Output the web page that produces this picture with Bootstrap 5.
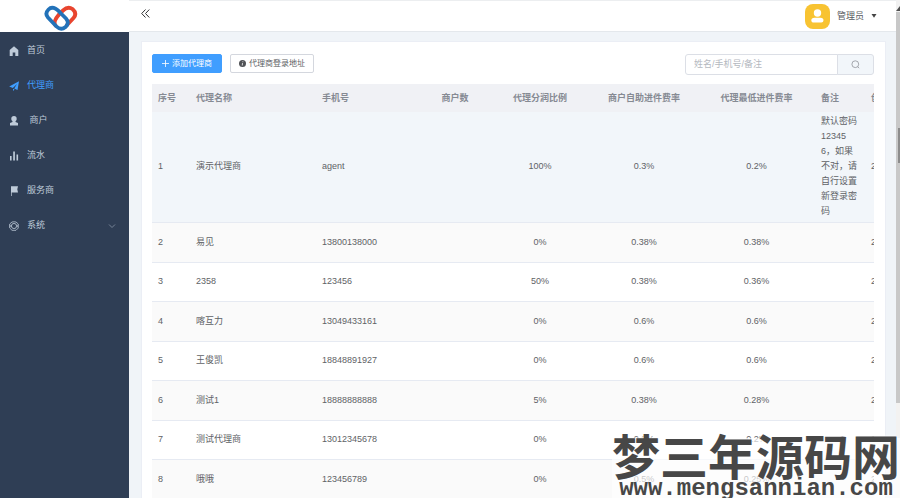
<!DOCTYPE html>
<html lang="zh-CN">
<head>
<meta charset="utf-8">
<meta name="viewport" content="width=device-width, initial-scale=1">
<title>代理商</title>
<link href="https://cdn.jsdelivr.net/npm/bootstrap@5.3.0/dist/css/bootstrap.min.css" rel="stylesheet">
<style>
body{font-family:"Liberation Sans","Noto Sans CJK SC",sans-serif;font-size:9px;line-height:15px;color:#606266;background:#f0f4f8}
.side{width:129px;background:#2f3e55}
.brand-box{height:32px;background:#fff}
.side .nav{padding-top:1px}
.side .nav-link{height:35px;padding:0 12px 0 9px;gap:8px;color:#bfcbd9}
.side .nav-link.active{color:#409eff}
.side .nav-link svg{width:10px;height:10px}
.topbar{height:32px;background:#fff;border-top:1px solid #eceef0;border-bottom:1px solid #e4e8ec;padding:0 19px 0 12px}
.topbar button,.topbar button:hover{color:#55585d;font-size:9px;line-height:15px}
.user{gap:7px}
.avatar{width:25px;height:25px;border-radius:8px;background:#f8c331}
.gutter{padding:9px 10px 0 12px}
.panel{border:1px solid #ebeef5;border-bottom:0;background:#fff;padding:12px 11px 0 10px}
.tool{height:19px;padding:0 8px;font-size:8px;line-height:15px;border-radius:2px;gap:3px;--bs-btn-border-color:#d4d7de;--bs-btn-color:#606266}
.tool-main{background:#409eff;border-color:#409eff;color:#fff;padding:0 9px}
.finder{width:189px;height:21px;margin-bottom:9px}
.finder .form-control{font-size:9px;line-height:15px;padding:0 8px;border-color:#dcdfe6;border-radius:3px;min-height:0}
.finder .form-control::placeholder{color:#b4b8c0}
.finder .btn{width:37px;background:#f2f6fa;border-color:#dcdfe6;color:#909399;border-radius:3px}
.grid{min-width:803px;table-layout:fixed;color:#606266;--bs-table-color:#606266;--bs-table-bg:#fff}
.grid th,.grid td{padding:0 6px;height:40px;border-color:#e6eaf2;word-break:break-all}
.grid th{height:28px;background:#f0f1f5;color:#868a93;border:0;white-space:nowrap;vertical-align:middle}
.grid tbody tr:nth-child(odd) td{height:39px}
.grid tbody tr:nth-child(even) td{background:#fafafa}
.grid tbody tr.current td{height:110px;background:#f2f6fa}
.c-no{width:38px}.c-name{width:126px}.c-tel{width:104px}.c-shops{width:70px}.c-share{width:100px}.c-self{width:108px}.c-low{width:117px}.c-note{width:50px}.c-time{width:90px}
.rail{width:4px;background:#f3f2f1}
.rail-thumb{height:81%;background:#c8c8c8;border-top:12px solid #f1f1f1}
.rail-arrow{top:5px;right:0}
.rail-mark{width:2px;height:35px;top:128px;right:0;background:#8c8c8c}
.stamp{right:0;bottom:0;background:rgba(255,255,255,.65);color:#474747;font-weight:700;text-shadow:0 0 2px #fff,0 0 3px #fff}
.stamp-name{font-size:48px;line-height:42px;white-space:nowrap}
.stamp-url{font-family:"Liberation Mono",monospace;font-size:24px;line-height:18px}
</style>
</head>
<body>
<div class="d-flex vh-100 overflow-hidden position-relative">
  <aside class="side flex-shrink-0">
    <div class="brand-box d-flex justify-content-center align-items-center pe-2 pt-1">
      <svg width="34" height="26" viewBox="0 0 34 26" fill="none" stroke-width="3.800" stroke-linecap="round" aria-label="logo">
        <path d="M11.500 20.500C9 17 13 11 19 5.500Q24 1 28.500 4Q33.500 8.500 29.500 13L23 20" stroke="#e8452f"/>
        <path d="M17 8.500C11 2 7.500 1.500 4.500 4.500Q.5 8.500 4 12.500L12.500 21.500Q17 25.800 21.500 22Q26 18 22 13.500L15 6.500" stroke="#2272b9"/>
      </svg>
    </div>
    <nav class="nav flex-column flex-nowrap">
      <a class="nav-link d-flex align-items-center" href="#"><svg viewBox="0 0 10 10" fill="currentColor"><path d="M5 .3 9.300 4v6H6.300V6.500H3.700V10H.7V4z"/></svg>首页</a>
      <a class="nav-link active d-flex align-items-center" href="#"><svg viewBox="0 0 10 10" fill="currentColor"><path d="M10 .3 8.500 9 5.200 7.600 8 3 3.800 7 .2 5.500zM4 7.800 5.600 8.500 4 10z"/></svg>代理商</a>
      <a class="nav-link d-flex align-items-center" href="#"><svg viewBox="0 0 10 10" fill="currentColor"><circle cx="5" cy="2.800" r="2.700"/><path d="M3.500 4.500h3v1.400L9 7v2.500H1V7l2.500-1.100z"/></svg><span>&nbsp;商户</span></a>
      <a class="nav-link d-flex align-items-center" href="#"><svg viewBox="0 0 10 10" fill="currentColor"><path d="M1 5h1.600v4.500H1zM4.200.5h1.700v9H4.200zM7.500 3.500h1.600v6H7.500z"/></svg>流水</a>
      <a class="nav-link d-flex align-items-center" href="#"><svg viewBox="0 0 10 10" fill="currentColor"><path d="M2 .2h7L8.300 3.300 9 6.500H2.700V10H2z"/></svg>服务商</a>
      <a class="nav-link d-flex align-items-center" href="#"><svg viewBox="0 0 10 10" fill="none" stroke="currentColor"><path d="M3 1 5 .8 7 1 9.300 3 9 5l.3 2L7 9.300H3L.7 7V3z" stroke-width=".8"/><circle cx="5" cy="5" r="2.600" stroke-width=".8"/><path d="M.5 5h2M8 5h1.500"/></svg>系统<svg class="ms-auto opacity-50" viewBox="0 0 10 10" fill="none" stroke="currentColor"><path d="m2 3.500 3 3 3-3"/></svg></a>
    </nav>
  </aside>

  <div class="flex-grow-1 d-flex flex-column overflow-hidden">
    <header class="topbar d-flex justify-content-between align-items-center flex-shrink-0">
      <button type="button" class="btn p-0 border-0 d-flex pb-1" aria-label="收起菜单"><svg width="9" height="10" viewBox="0 0 9 10" fill="none" stroke="#303133"><path d="M4.500 .5.700 4.500l3.800 4M8.300.5 4.500 4.500l3.800 4"/></svg></button>
      <button type="button" class="btn user p-0 border-0 d-flex align-items-center me-n1">
        <span class="avatar d-flex align-items-center justify-content-center"><svg width="13" height="14" viewBox="0 0 13 14" fill="#fff"><circle cx="6.500" cy="4" r="3.700"/><path d="M3.500 8.700h6q3 0 3 2.500T10 13.500H3Q.3 13.500.3 11.200t3.200-2.500z"/></svg></span>
        <span>管理员</span>
        <svg width="6" height="4" viewBox="0 0 6 4"><path d="M.5 0h5L3 3.800z" fill="#444"/></svg>
      </button>
    </header>
    <main class="gutter flex-grow-1 d-flex flex-column overflow-hidden">
      <section class="panel flex-grow-1 overflow-hidden">
        <div class="d-flex align-items-start">
          <button type="button" class="btn tool tool-main d-flex align-items-center me-2"><svg width="7" height="7" viewBox="0 0 7 7" stroke="currentColor" stroke-width=".8"><path d="M3.500 0v7M0 3.500h7"/></svg>添加代理商</button>
          <button type="button" class="btn tool d-flex align-items-center"><svg width="7" height="7" viewBox="0 0 8 8"><circle cx="4" cy="4" r="4" fill="#505256"/><path d="M4.400 1.500v1M4 3.500 3.700 6.300" stroke="#fff" stroke-width=".9"/></svg>代理商登录地址</button>
          <form class="finder input-group flex-nowrap ms-auto">
            <input type="text" class="form-control" placeholder="姓名/手机号/备注" aria-label="姓名/手机号/备注">
            <button type="button" class="btn p-0 d-flex align-items-center justify-content-center" aria-label="搜索"><svg width="9" height="9" viewBox="0 0 9 9" fill="none" stroke="currentColor" stroke-width=".8"><circle cx="4.300" cy="4.200" r="3.400"/><path d="m6.700 6.700 1.500 1.500"/></svg></button>
          </form>
        </div>
        <div class="overflow-hidden">
          <table class="table grid align-middle mb-0">
            <thead><tr><th class="c-no">序号</th><th class="c-name">代理名称</th><th class="c-tel">手机号</th><th class="c-shops text-center">商户数</th><th class="c-share text-center">代理分润比例</th><th class="c-self text-center">商户自助进件费率</th><th class="c-low text-center">代理最低进件费率</th><th class="c-note">备注</th><th class="c-time">创建时间</th></tr></thead>
            <tbody>
              <tr class="current"><td>1</td><td>演示代理商</td><td>agent</td><td></td><td class="text-center">100%</td><td class="text-center">0.3%</td><td class="text-center">0.2%</td><td>默认密码123456，如果不对，请自行设置新登录密码</td><td>2</td></tr>
              <tr><td>2</td><td>易见</td><td>13800138000</td><td></td><td class="text-center">0%</td><td class="text-center">0.38%</td><td class="text-center">0.38%</td><td></td><td>2</td></tr>
              <tr><td>3</td><td>2358</td><td>123456</td><td></td><td class="text-center">50%</td><td class="text-center">0.38%</td><td class="text-center">0.36%</td><td></td><td>2</td></tr>
              <tr><td>4</td><td>喀互力</td><td>13049433161</td><td></td><td class="text-center">0%</td><td class="text-center">0.6%</td><td class="text-center">0.6%</td><td></td><td>2</td></tr>
              <tr><td>5</td><td>王俊凯</td><td>18848891927</td><td></td><td class="text-center">0%</td><td class="text-center">0.6%</td><td class="text-center">0.6%</td><td></td><td>2</td></tr>
              <tr><td>6</td><td>测试1</td><td>18888888888</td><td></td><td class="text-center">5%</td><td class="text-center">0.38%</td><td class="text-center">0.28%</td><td></td><td>2</td></tr>
              <tr><td>7</td><td>测试代理商</td><td>13012345678</td><td></td><td class="text-center">0%</td><td class="text-center">0.2%</td><td class="text-center">0.2%</td><td></td><td>2</td></tr>
              <tr><td>8</td><td>哦哦</td><td>123456789</td><td></td><td class="text-center">0%</td><td class="text-center">0.5%</td><td class="text-center">0.25%</td><td></td><td>2</td></tr>
            </tbody>
          </table>
        </div>
      </section>
    </main>
  </div>
  <div class="rail flex-shrink-0 position-relative"><div class="rail-thumb"></div><svg class="rail-arrow position-absolute" width="4" height="6" viewBox="0 0 4 6"><path d="M0 6 4 1v5z" fill="#505050"/></svg><div class="rail-mark position-absolute"></div></div>
  <div class="stamp position-absolute text-center">
    <div class="stamp-name">梦三年源码网</div>
    <div class="stamp-url">www.mengsannian.com</div>
  </div>
</div>
<script src="https://cdn.jsdelivr.net/npm/bootstrap@5.3.0/dist/js/bootstrap.bundle.min.js"></script>
</body>
</html>
